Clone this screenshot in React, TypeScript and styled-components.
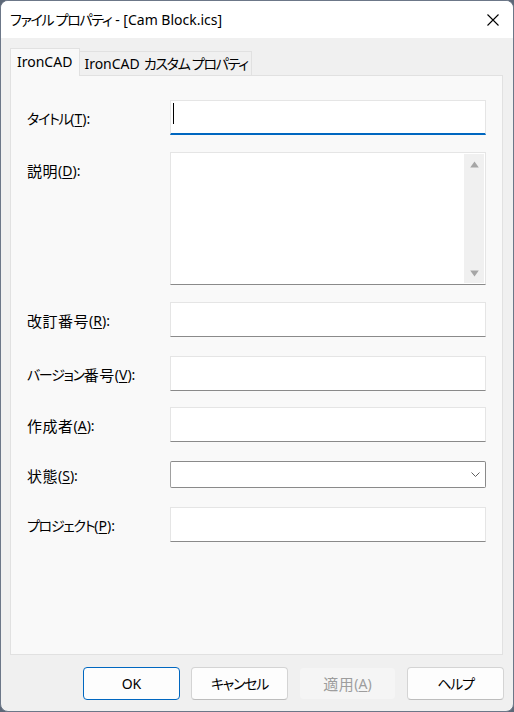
import React from "react";
import styled, { createGlobalStyle } from "styled-components";

const GlobalStyle = createGlobalStyle`
  html, body { margin: 0; padding: 0; background: #5d6878; }
  * { box-sizing: border-box; }
`;

const Window = styled.div`
  width: 514px;
  height: 712px;
  display: flex;
  flex-direction: column;
  background: #f0f0f0;
  border: 1px solid #6c7788;
  border-radius: 8px;
  overflow: hidden;
  font-family: "Noto Sans", "Noto Sans CJK JP", sans-serif;
  font-feature-settings: "palt";
  font-size: 14px;
  color: #000;
`;

/* Japanese runs: kana are narrower and kanji wider than in the fallback font */
const Kana = styled.span`
  letter-spacing: -1.3px;
`;

const Kanji = styled.span`
  font-size: 15px;
  letter-spacing: 0.5px;
`;

const Space = styled.span`
  display: inline-block;
  width: 4px;
`;

const TitleBar = styled.div`
  height: 37px;
  flex: none;
  display: flex;
  align-items: center;
  background: #ffffff;
  padding-left: 9px;
`;

const TitleText = styled.div`
  line-height: 20px;
  white-space: nowrap;
`;

const CloseIcon = styled.svg`
  margin-left: auto;
  margin-right: 14px;
  width: 12px;
  height: 12px;
`;

const Body = styled.div`
  flex: 1;
  display: flex;
  flex-direction: column;
  padding: 10px 10px 11px 9px;
  min-height: 0;
`;

const TabStrip = styled.div`
  display: flex;
  align-items: flex-end;
  height: 28px;
  margin-bottom: -1px;
  position: relative;
  z-index: 1;
`;

const Tab = styled.div<{ $active?: boolean }>`
  height: ${(p) => (p.$active ? "28px" : "25px")};
  display: flex;
  align-items: center;
  white-space: pre;
  line-height: 20px;
  border: 1px solid #e1e1e1;
  border-bottom: ${(p) => (p.$active ? "none" : "1px solid #e1e1e1")};
  border-left: ${(p) => (p.$active ? "1px solid #e1e1e1" : "none")};
  background: ${(p) => (p.$active ? "#f9f9f9" : "#f0f0f0")};
  padding: ${(p) => (p.$active ? "0 7px 1px 6px" : "0 3px 0 4px")};
`;

const Panel = styled.div`
  flex: 1;
  background: #f9f9f9;
  border: 1px solid #e1e1e1;
  padding: 24px 16px 0 16px;
  display: flex;
  flex-direction: column;
`;

const Row = styled.div<{ $mt: number; $top?: boolean }>`
  display: flex;
  align-items: ${(p) => (p.$top ? "flex-start" : "center")};
  margin-top: ${(p) => p.$mt}px;
`;

const Label = styled.div`
  width: 143px;
  flex: none;
  height: 35px;
  display: flex;
  align-items: center;
  padding-top: 2px;
  line-height: 20px;
  white-space: nowrap;
`;

const Key = styled.span`
  text-decoration: underline;
  text-decoration-thickness: 1px;
  text-underline-offset: 2px;
`;

const Field = styled.div<{ $h: number; $focused?: boolean }>`
  width: 316px;
  height: ${(p) => p.$h}px;
  background: #ffffff;
  border: 1px solid #e5e5e5;
  border-bottom: ${(p) => (p.$focused ? "2px solid #0067c0" : "1px solid #8a8a8a")};
  display: flex;
  align-items: flex-start;
`;

const Caret = styled.span`
  width: 1px;
  height: 21px;
  background: #000;
  margin: 2px 0 0 2px;
`;

const TextArea = styled(Field)`
  justify-content: flex-end;
  padding: 1px;
`;

const ScrollBar = styled.div`
  width: 20px;
  height: 100%;
  background: #f0f0f0;
  display: flex;
  flex-direction: column;
  align-items: center;
  justify-content: space-between;
  padding: 7px 0 6px 0;
`;

const Arrow = styled.svg`
  width: 9px;
  height: 7px;
  display: block;
`;

const Select = styled.div`
  width: 316px;
  height: 27px;
  background: #ffffff;
  border: 1px solid #8a8a8a;
  border-left-color: #a0a0a0;
  border-radius: 2px;
  display: flex;
  align-items: center;
  justify-content: flex-end;
  padding-right: 5px;
`;

const Chevron = styled.svg`
  width: 9px;
  height: 5px;
  display: block;
`;

const ButtonBar = styled.div`
  display: flex;
  justify-content: flex-end;
  gap: 11px;
  margin-top: 12px;
  margin-right: -1px;
  height: 33px;
  flex: none;
`;

const Button = styled.div<{ $variant?: "primary" | "disabled" }>`
  width: 97px;
  height: 33px;
  display: flex;
  align-items: center;
  justify-content: center;
  border-radius: 4px;
  line-height: 20px;
  white-space: nowrap;
  background: ${(p) => (p.$variant === "disabled" ? "#f5f5f5" : "#fdfdfd")};
  color: ${(p) => (p.$variant === "disabled" ? "#9d9d9d" : "#000")};
  border: 1px solid
    ${(p) =>
      p.$variant === "primary" ? "#0067c0" : p.$variant === "disabled" ? "#f0f0f0" : "#d4d4d4"};
  border-bottom-color: ${(p) =>
    p.$variant === "primary" ? "#0067c0" : p.$variant === "disabled" ? "#f0f0f0" : "#bdbdbd"};
`;

export default function App() {
  return (
    <>
      <GlobalStyle />
      <Window>
        <TitleBar>
          <TitleText>
            <Kana>ファイル プロパティ</Kana> - [Cam Block.ics]
          </TitleText>
          <CloseIcon viewBox="0 0 12 12">
            <path d="M0.5 0.5 L11.5 11.5 M11.5 0.5 L0.5 11.5" stroke="#000" strokeWidth="1.1" fill="none" />
          </CloseIcon>
        </TitleBar>
        <Body>
          <TabStrip>
            <Tab $active>IronCAD</Tab>
            <Tab>
              <span>IronCAD</span>
              <Space />
              <Kana>カスタム プロパティ</Kana>
            </Tab>
          </TabStrip>
          <Panel>
            <Row $mt={0}>
              <Label>
                <Kana>タイトル</Kana>(<Key>T</Key>):
              </Label>
              <Field $h={35} $focused>
                <Caret />
              </Field>
            </Row>
            <Row $mt={17} $top>
              <Label>
                <Kanji>説明</Kanji>(<Key>D</Key>):
              </Label>
              <TextArea $h={133}>
                <ScrollBar>
                  <Arrow viewBox="0 0 9 7">
                    <path d="M4.5 0.5 L8.8 6.5 L0.2 6.5 Z" fill="#a6a6a6" />
                  </Arrow>
                  <Arrow viewBox="0 0 9 7">
                    <path d="M4.5 6.5 L8.8 0.5 L0.2 0.5 Z" fill="#a6a6a6" />
                  </Arrow>
                </ScrollBar>
              </TextArea>
            </Row>
            <Row $mt={17}>
              <Label>
                <Kanji>改訂番号</Kanji>(<Key>R</Key>):
              </Label>
              <Field $h={35} />
            </Row>
            <Row $mt={19}>
              <Label>
                <Kana>バージョン</Kana>
                <Kanji>番号</Kanji>(<Key>V</Key>):
              </Label>
              <Field $h={35} />
            </Row>
            <Row $mt={16}>
              <Label>
                <Kanji>作成者</Kanji>(<Key>A</Key>):
              </Label>
              <Field $h={35} />
            </Row>
            <Row $mt={15}>
              <Label>
                <Kanji>状態</Kanji>(<Key>S</Key>):
              </Label>
              <Select>
                <Chevron viewBox="0 0 9 5">
                  <path d="M0.5 0.5 L4.5 4.5 L8.5 0.5" stroke="#5f5f5f" strokeWidth="1" fill="none" />
                </Chevron>
              </Select>
            </Row>
            <Row $mt={15}>
              <Label>
                <Kana>プロジェクト</Kana>(<Key>P</Key>):
              </Label>
              <Field $h={35} />
            </Row>
          </Panel>
          <ButtonBar>
            <Button $variant="primary">OK</Button>
            <Button>
              <Kana>キャンセル</Kana>
            </Button>
            <Button $variant="disabled">
              <Kanji>適用</Kanji>(<Key>A</Key>)
            </Button>
            <Button>
              <Kana>ヘルプ</Kana>
            </Button>
          </ButtonBar>
        </Body>
      </Window>
    </>
  );
}
